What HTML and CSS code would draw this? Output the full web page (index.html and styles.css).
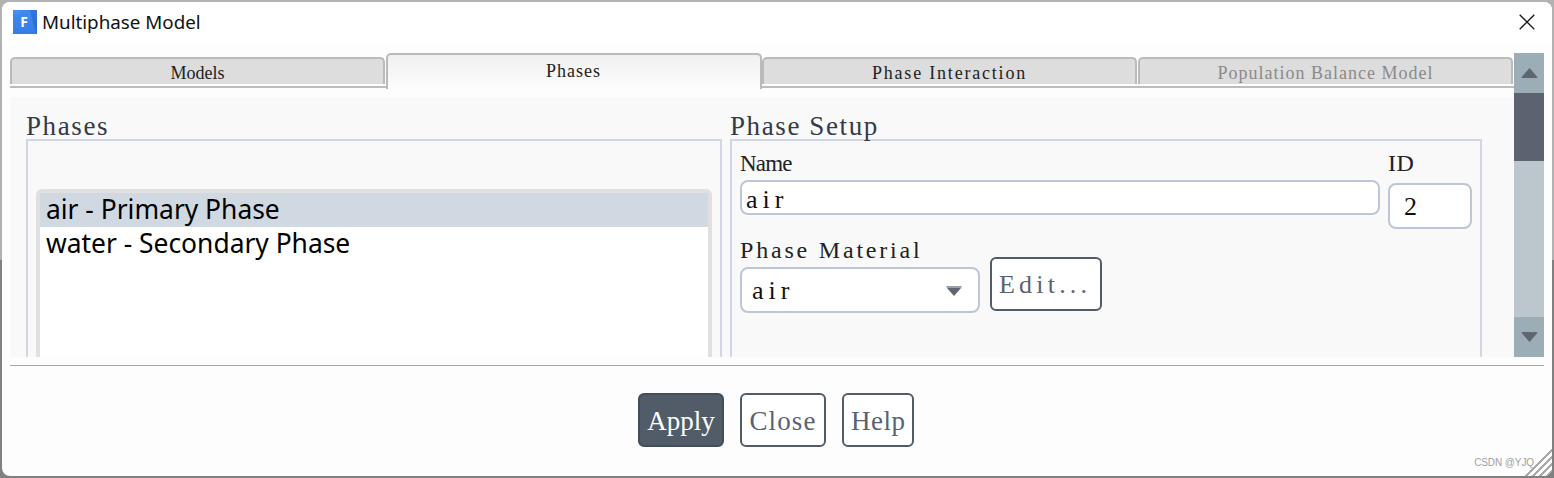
FILE: index.html
```html
<!DOCTYPE html>
<html lang="en">
<head>
<meta charset="utf-8">
<title>Multiphase Model</title>
<link rel="stylesheet" href="styles.css">
</head>
<body>
<div class="window">
  <header class="titlebar">
    <svg class="logo" viewBox="0 0 24 24" width="24" height="24" aria-hidden="true">
      <defs><linearGradient id="lg" x1="0" y1="0" x2="0" y2="1"><stop offset="0" stop-color="#4a90f0"/><stop offset="1" stop-color="#2a6fe0"/></linearGradient></defs>
      <rect width="24" height="24" fill="url(#lg)"/>
      <polygon points="17,0 24,0 24,24 21,24" fill="#1f5fc8" opacity=".55"/>
      <polygon points="0,24 0,15 8,0 17,0 24,24" fill="#3d86ee" opacity=".6"/>
      <text x="11" y="16.5" class="logo-f">F</text>
    </svg>
    <span class="title">Multiphase Model</span>
    <svg class="close" viewBox="0 0 16 16" width="16" height="16" aria-hidden="true"><path d="M.7.7 15.3 15.3M15.3.7.7 15.3" stroke="#1a1a1a" stroke-width="1.3" fill="none"/></svg>
  </header>
  <div class="main">
    <div class="pane">
      <nav class="tabs">
        <div class="tab t-models">Models</div>
        <div class="tab active t-phases">Phases</div>
        <div class="tab t-inter">Phase Interaction</div>
        <div class="tab disabled t-pop">Population Balance Model</div>
      </nav>
      <section class="panel">
        <div class="group left">
          <h2 class="legend">Phases</h2>
          <div class="box phases-box">
            <ul class="list">
              <li class="selected">air - Primary Phase</li>
              <li>water - Secondary Phase</li>
            </ul>
          </div>
        </div>
        <div class="group right">
          <h2 class="legend">Phase Setup</h2>
          <div class="box setup-box">
            <div class="name-row">
              <div class="field">
                <label class="label l-name">Name</label>
                <div class="input name-input">air</div>
              </div>
              <div class="field">
                <label class="label l-id">ID</label>
                <div class="input id-input">2</div>
              </div>
            </div>
            <div class="material-row">
              <div class="field">
                <label class="label l-mat">Phase Material</label>
                <div class="input select">
                  <span>air</span>
                  <svg viewBox="0 0 16 10" width="16" height="10" aria-hidden="true"><polygon points="0,0 16,0 15,2 1,2" fill="#9aa0aa"/><polygon points="1,2 15,2 8,10" fill="#5f6672"/></svg>
                </div>
              </div>
              <div class="btn edit">Edit...</div>
            </div>
          </div>
        </div>
      </section>
    </div>
    <aside class="scrollbar">
      <div class="sb-btn"><svg viewBox="0 0 16 10" width="17" height="10" aria-hidden="true"><polygon points="8,0 15,8 16,10 0,10 1,8" fill="#5f6672"/></svg></div>
      <div class="sb-thumb"></div>
      <div class="sb-track"></div>
      <div class="sb-btn"><svg viewBox="0 0 16 10" width="17" height="10" aria-hidden="true"><polygon points="0,0 16,0 15,2 8,10 1,2" fill="#5f6672"/></svg></div>
    </aside>
  </div>
  <footer class="footer">
    <div class="btn primary">Apply</div>
    <div class="btn b-close">Close</div>
    <div class="btn b-help">Help</div>
  </footer>
  <div class="grip"></div>
  <div class="watermark">CSDN @YJQ</div>
</div>
</body>
</html>
```
FILE: styles.css
```css
* { box-sizing: border-box; }
html, body { margin: 0; height: 100%; }
body {
  background: linear-gradient(#b2b2b2 0 260px, #808080 260px);
  padding: 2px;
  overflow: hidden;
}
.window {
  position: relative;
  width: 1550px;
  height: 474px;
  background: #fdfdfd;
  border-radius: 8px;
  overflow: hidden;
  display: flex;
  flex-direction: column;
  font-family: "Liberation Serif", serif;
}
.titlebar {
  height: 43px;
  flex: none;
  background: #fff;
  display: flex;
  align-items: center;
  padding: 0 16px 4px 11px;
}
.logo { flex: none; }
.logo-f { font: 700 14px "Noto Sans", sans-serif; fill: #fff; text-anchor: middle; }
.title { font: 18.8px "Noto Sans", sans-serif; color: #111; margin-left: 5px; }
.close { margin-left: auto; margin-right: 1px; }
.main { display: flex; height: 304px; margin: 8px 8px 0 8px; flex: none; }
.pane { width: 1504px; display: flex; flex-direction: column; }
.tabs {
  display: grid;
  grid-template-columns: repeat(4, 376px);
  height: 35px;
  align-items: end;
  position: relative;
  background: linear-gradient(#bcbcbc, #bcbcbc) 0 33px / 100% 2px no-repeat;
  flex: none;
}
.tab {
  height: 27px;
  margin: 0 1px 4px 0;
  background: #dddddd;
  border: 2px solid #bababa;
  border-bottom: 0;
  border-radius: 5px 5px 0 0;
  color: #222;
  font-size: 18px;
  line-height: 29px;
  text-align: center;
  white-space: nowrap;
}
.t-models { letter-spacing: 0; }
.t-phases { letter-spacing: 1px; }
.t-inter { letter-spacing: 1.8px; }
.t-pop { letter-spacing: 1px; }
.tab.active {
  height: 36px;
  margin: 0 0 -1px 0;
  background: linear-gradient(#f0f0f0, #fdfdfd);
  line-height: 32px;
  padding-right: 1px;
}
.tab.disabled { color: #8a8a8a; }
.panel {
  margin-top: 9px;
  height: 260px;
  background: #f9f9f9;
  overflow: hidden;
  padding: 16px 0 0 16px;
  display: flex;
  gap: 8px;
}
.group { flex: none; }
.left { width: 696px; }
.right { width: 752px; }
.legend {
  margin: 0;
  height: 26px;
  font-size: 27px;
  font-weight: 400;
  line-height: 26px;
  letter-spacing: 1.6px;
  color: #333a4a;
  white-space: nowrap;
}
.box {
  border: 2px solid #d0d6e4;
  height: 300px;
}
.phases-box { padding: 48px 8px 0; }
.list {
  list-style: none;
  margin: 0;
  padding: 0;
  height: 260px;
  background: #fff;
  border: 4px solid #e0e0e0;
  border-radius: 6px 6px 0 0;
  font: 26.4px/32px "Noto Sans", sans-serif;
  color: #000;
}
.list li { height: 34px; padding-left: 6px; white-space: nowrap; }
.list .selected { background: #d0d8e2; }
.setup-box { padding: 10px 8px 0; }
.name-row { display: grid; grid-template-columns: 640px 84px; gap: 8px; }
.label { display: block; height: 24px; font-size: 24px; line-height: 24px; color: #222; white-space: nowrap; }
.l-name { font-size: 23px; line-height: 26px; letter-spacing: -.8px; }
.l-id { letter-spacing: .5px; }
.l-mat { letter-spacing: 2.8px; }
.input {
  background: #fff;
  border: 2px solid #bdc6d6;
  border-radius: 8px;
  color: #111;
  font-size: 26px;
  letter-spacing: 5px;
}
.name-input { height: 35px; margin-top: 5px; line-height: 35px; padding-left: 4px; }
.id-input { height: 46px; margin-top: 8px; line-height: 44px; padding-left: 14px; }
.material-row { display: flex; gap: 10px; align-items: flex-end; margin-top: 9px; }
.select {
  width: 240px;
  height: 46px;
  margin-top: 5px;
  padding: 2px 16px 0 10px;
  display: flex;
  align-items: center;
  justify-content: space-between;
}
.btn {
  height: 54px;
  border: 2px solid #525c69;
  border-radius: 6px;
  background: #fff;
  color: #5a6270;
  font-size: 27px;
  line-height: 53px;
  text-align: center;
  padding: 0 7px;
  white-space: nowrap;
}
.primary { width: 86px; background: #525c69; border-color: #434d5a; color: #fff; }
.b-close { width: 86px; letter-spacing: 1.1px; }
.b-help { width: 72px; letter-spacing: .5px; }
.edit { width: 112px; font-size: 26px; margin-bottom: 2px; line-height: 52px; letter-spacing: 4.2px; padding: 0 0 0 7px; text-align: left; }
.scrollbar { width: 30px; display: flex; flex-direction: column; }
.sb-btn { height: 40px; background: #9badb5; display: flex; align-items: center; justify-content: center; flex: none; }
.sb-thumb { height: 68px; background: #5b6270; flex: none; }
.sb-track { height: 156px; background: #bcc7cd; flex: none; }
.footer {
  margin: 8px 8px 0;
  border-top: 1px solid #a6a6a6;
  padding: 27px 2px 0 0;
  display: flex;
  justify-content: center;
  gap: 16px;
}
.grip {
  position: absolute;
  right: 0;
  bottom: 0;
  width: 30px;
  height: 30px;
  background: repeating-linear-gradient(135deg, #fdfdfd 0 3px, #a9a9a9 3px 5px);
  clip-path: polygon(100% 0, 100% 100%, 0 100%);
}
.watermark {
  position: absolute;
  right: 18px;
  bottom: 8px;
  font: 10px "Liberation Sans", sans-serif;
  letter-spacing: -.1px;
  color: #a0a0a0;
}
```
